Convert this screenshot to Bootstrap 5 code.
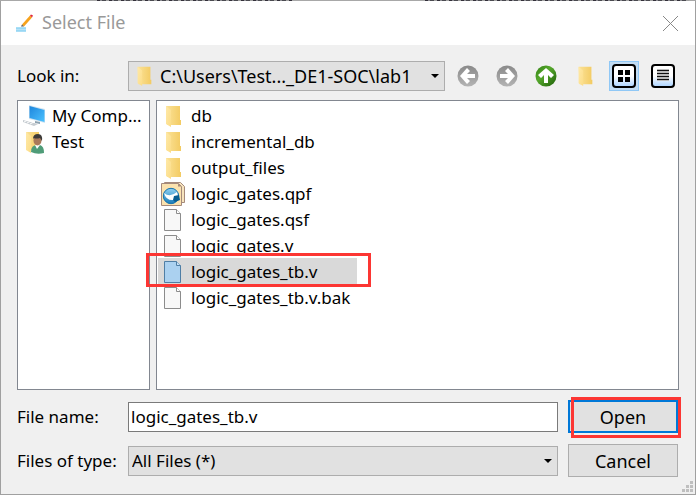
<!DOCTYPE html>
<html lang="en">
<head>
<meta charset="utf-8">
<meta name="viewport" content="width=device-width, initial-scale=1">
<title>Select File</title>
<link href="https://cdn.jsdelivr.net/npm/bootstrap@5.3.0/dist/css/bootstrap.min.css" rel="stylesheet">
<style>
body { font-family: "Noto Sans", sans-serif; font-size: 17px; line-height: 26px; color: #000; background: #a0a0a0; }
.strip { height: 1px; background: #a8a8a8; }
.strip i { height: 1px; background: repeating-linear-gradient(90deg, #33303a 0 3px, #8a8a90 3px 5px, #4a4a50 5px 9px, #a0a0a0 9px 12px); }
.strip-a { width: 28%; margin-left: 14%; }
.strip-b { width: 38%; margin-left: 19%; }
.dialog { background: #f0f0f0; border: 1px solid #a0a0a0; border-top: 0; }
.titlebar { height: 44px; background: #fff; color: #999; padding: 0 16px 0 15px; }
.title-text { font-size: 18px; }
.titlebar button { color: #888; }
.plain { border: 0; background: none; padding: 0; color: inherit; }
.panel { padding: 16px; }
.label-col { width: 111px; }
.look-box { width: 317px; }
.field { height: 30px; border: 1px solid #adadad; border-radius: 0; background: #e1e1e1; color: #000; padding: 0 24px 0 3px; width: 100%; appearance: none; line-height: 26px; }
input.field { background: #fff; border-color: #7a7a7a; padding: 0 2px; }
.look-box .field { padding-left: 31px; font-size: 18px; }
.over-icon { left: 5px; top: 4px; pointer-events: none; }
.caret { right: 6px; top: 13px; pointer-events: none; }
.tool { width: 30px; height: 30px; }
.tool.on { background: #c2dcf3; border: 1px solid #90c8f6; }
.tools { gap: 9px; margin: 0 1px 0 8px; }
.panes { height: 290px; margin: 9px 0 10px; gap: 6px; }
.pane { background: #fff; border: 1px solid #828790; padding: 1px; }
.places { width: 133px; }
.files { min-width: 199px; }
.entry { height: 26px; gap: 6px; padding: 1px 3px 0 3px; text-align: left; white-space: nowrap; width: 100%; }
.picked { background: #d9d9d9; }
.frame { border: 3px solid #fc3633; pointer-events: none; z-index: 2; }
.row-frame { left: -12px; right: -14px; top: -5px; bottom: -3px; }
.open-frame { left: 3px; right: -3px; top: -3px; bottom: -5px; }
.actions { gap: 11px; margin-right: 1px; }
.action-row { gap: 10px; }
.push { width: 110px; height: 33px; background: #e1e1e1; border: 1px solid #adadad; color: #000; font-size: 18px; }
.push.main { border: 2px solid #0078d7; }
.grip { right: 2px; bottom: 2px; }
</style>
<script src="https://cdn.jsdelivr.net/npm/bootstrap@5.3.0/dist/js/bootstrap.bundle.min.js"></script>
</head>
<body>
<svg width="0" height="0" class="position-absolute" aria-hidden="true">
  <defs>
    <linearGradient id="gFold" x2="1"><stop offset="0" stop-color="#fbe298"/><stop offset="1" stop-color="#f3cb62"/></linearGradient>
    <linearGradient id="gFront" x2="1" y2="1"><stop offset="0" stop-color="#ffe9a8"/><stop offset="1" stop-color="#fbdc86"/></linearGradient>
    <linearGradient id="gGrey" x2="0" y2="1"><stop offset="0" stop-color="#8a8a8a"/><stop offset="1" stop-color="#b4b4b4"/></linearGradient>
    <linearGradient id="gGreen" x2="1" y2="1"><stop offset="0" stop-color="#2f7f12"/><stop offset=".4" stop-color="#56a82c"/><stop offset="1" stop-color="#1e5f08"/></linearGradient>
    <linearGradient id="gView" x2="0" y2="1"><stop offset=".5" stop-color="#fff"/><stop offset="1" stop-color="#a9d2ff"/></linearGradient>
    <linearGradient id="gScreen" x2="1" y2="1"><stop offset="0" stop-color="#1e86dc"/><stop offset="1" stop-color="#4cc2ff"/></linearGradient>
    <linearGradient id="gBall" x2="0" y2="1"><stop offset="0" stop-color="#8fd0f2"/><stop offset="1" stop-color="#1a7dba"/></linearGradient>
    <symbol id="folder" viewBox="0 0 24 24"><path d="M5 2h14v14h1v5H6z" fill="url(#gFold)"/><path d="M5 2l5 4v17l-5-3z" fill="url(#gFront)"/></symbol>
    <symbol id="sheet" viewBox="0 0 24 24"><path d="M3.500 1.500h12l4 4v17h-16z" fill="#f8f8f8" stroke="#8c8c8c"/><path d="M15.500 1.500v4h4" fill="#fff" stroke="#8c8c8c"/></symbol>
    <symbol id="sheetOn" viewBox="0 0 24 24"><path d="M3.500 1.500h12l4 4v17h-16z" fill="#abd1f0" stroke="#4f7ea5"/><path d="M15.500 1.500v4h4" fill="#c6e0f5" stroke="#4f7ea5"/></symbol>
    <symbol id="project" viewBox="0 0 24 24"><path d="M3.500 .500h16l4 4v16h-20z" fill="#f7e4bd" stroke="#a58a7b"/><path d="M.500 1.500h17l3 3v19h-20z" fill="#fbe2ae" stroke="#a58a7b"/><path d="M17 1.500v3h3.500z" fill="#a58a7b"/><circle cx="10" cy="14" r="7.700" fill="url(#gBall)" stroke="#1674ae"/><path d="M3 11q6 5 13-1l1 4h-4v4q-8 1-10-7z" fill="#fff"/><path d="M13 14l5-1 1 5-5 2-2-2z" fill="#075d91"/></symbol>
    <symbol id="computer" viewBox="0 0 24 24"><path d="M7 1l16 4v14l-16-4z" fill="#d4e4f0"/><path d="M7.500 2l15 4v12l-15-4z" fill="url(#gScreen)"/><path d="M13 17l5 1v2l-5-1z" fill="#8da2b0"/><path d="M1 16l11 3 4 1-4 2-11-4z" fill="#c6ccd1"/><path d="M2 18l4-2M5 19l4-2M8 20l4-2" stroke="#fff"/></symbol>
    <symbol id="person" viewBox="0 0 24 24"><path d="M4 2h13v18H5z" fill="url(#gFold)"/><path d="M4 2l5 4v17l-5-3z" fill="url(#gFront)"/><path d="M9 22q0-7 6-7h3q4 1 4 8-7 2-13-1z" fill="#4f9c78"/><path d="M13 15l2 4 3-4z" fill="#fff"/><ellipse cx="15.500" cy="10.500" rx="4" ry="5" fill="#a9795a"/><path d="M11 9q0-5 5-5t4 7l-2-3q-4 1-6 0z" fill="#3c3a38"/></symbol>
    <symbol id="arrow" viewBox="0 0 22 22"><path d="M10 3L3 11l7 8 3-3-3-3h8V9h-8l3-3z" fill="#fff"/></symbol>
  </defs>
</svg>
<div class="min-vh-100 d-flex flex-column">
<div class="strip d-flex"><i class="strip-a"></i><i class="strip-b"></i></div>
<main class="dialog flex-grow-1 position-relative">
  <header class="titlebar d-flex align-items-center">
    <svg width="18" height="19" viewBox="0 0 18 18" class="me-2" aria-hidden="true"><path d="M0 13h10v4H0z" fill="#b5e2f8"/><path d="M0 13.500h10M0 16.500h10" stroke="#7accf0"/><path d="M6 10L14 1l2 2-8 9z" fill="#f6a21c"/><path d="M14 1l1-1 2 1-1 2z" fill="#e0263d"/><path d="M5 12l1-2 2 2z" fill="#555"/></svg>
    <h1 class="m-0 fw-normal title-text">Select File</h1>
    <button type="button" class="plain ms-auto d-flex" aria-label="Close"><svg width="17" height="17" viewBox="0 0 17 17"><path d="M1 1l15 15M16 1L1 16" stroke="currentColor"/></svg></button>
  </header>
  <form class="panel">
    <div class="d-flex align-items-center">
      <label class="label-col flex-shrink-0" for="look">Look in:</label>
      <div class="look-box position-relative flex-grow-1">
        <select id="look" class="field d-block"><option>C:\Users\Test..._DE1-SOC\lab1</option></select>
        <svg class="over-icon position-absolute" width="22" height="22"><use href="#folder"/></svg>
        <svg class="caret position-absolute" width="8" height="5"><path d="M0 0h8L4 4z"/></svg>
      </div>
      <div class="tools d-flex align-items-center flex-shrink-0">
        <button type="button" class="plain tool d-flex align-items-center justify-content-center" aria-label="Back"><svg width="22" height="22"><circle cx="11" cy="11" r="10.500" fill="url(#gGrey)"/><use href="#arrow"/></svg></button>
        <button type="button" class="plain tool d-flex align-items-center justify-content-center" aria-label="Forward"><svg width="22" height="22"><circle cx="11" cy="11" r="10.500" fill="url(#gGrey)"/><use href="#arrow" transform="rotate(180 11 11)"/></svg></button>
        <button type="button" class="plain tool d-flex align-items-center justify-content-center" aria-label="Parent directory"><svg width="22" height="22"><circle cx="11" cy="11" r="10.500" fill="url(#gGreen)"/><use href="#arrow" transform="rotate(90 11 11)"/></svg></button>
        <button type="button" class="plain tool d-flex align-items-center justify-content-center" aria-label="New folder"><svg width="24" height="22"><use href="#folder"/></svg></button>
        <button type="button" class="plain tool on d-flex align-items-center justify-content-center" aria-label="List view"><svg width="24" height="24"><rect x="1" y="1" width="22" height="22" rx="3" fill="url(#gView)" stroke="#000" stroke-width="2"/><path d="M6 6h5v5H6zM13 6h5v5h-5zM6 13h5v5H6zM13 13h5v5h-5z"/></svg></button>
        <button type="button" class="plain tool d-flex align-items-center justify-content-center" aria-label="Detail view"><svg width="24" height="24"><rect x="1" y="1" width="22" height="22" rx="3" fill="url(#gView)" stroke="#000" stroke-width="2"/><path d="M6 5h12v12H6z" fill="#bbb"/><path d="M6 6.500h12M6 9.500h12M6 12.500h12M6 15.500h12" stroke="#111"/></svg></button>
      </div>
    </div>
    <div class="panes d-flex">
      <div class="pane places flex-shrink-0">
        <button type="button" class="plain entry d-flex align-items-center"><svg width="24" height="24"><use href="#computer"/></svg>My Comp...</button>
        <button type="button" class="plain entry d-flex align-items-center"><svg width="24" height="24"><use href="#person"/></svg>Test</button>
      </div>
      <div class="pane flex-grow-1">
        <div class="files d-inline-flex flex-column">
          <button type="button" class="plain entry d-flex align-items-center"><svg width="24" height="24"><use href="#folder"/></svg>db</button>
          <button type="button" class="plain entry d-flex align-items-center"><svg width="24" height="24"><use href="#folder"/></svg>incremental_db</button>
          <button type="button" class="plain entry d-flex align-items-center"><svg width="24" height="24"><use href="#folder"/></svg>output_files</button>
          <button type="button" class="plain entry d-flex align-items-center"><svg width="24" height="24"><use href="#project"/></svg>logic_gates.qpf</button>
          <button type="button" class="plain entry d-flex align-items-center"><svg width="24" height="24"><use href="#sheet"/></svg>logic_gates.qsf</button>
          <button type="button" class="plain entry d-flex align-items-center"><svg width="24" height="24"><use href="#sheet"/></svg>logic_gates.v</button>
          <div class="position-relative"><button type="button" class="plain entry picked d-flex align-items-center"><svg width="24" height="24"><use href="#sheetOn"/></svg>logic_gates_tb.v</button><span class="frame row-frame position-absolute"></span></div>
          <button type="button" class="plain entry d-flex align-items-center"><svg width="24" height="24"><use href="#sheet"/></svg>logic_gates_tb.v.bak</button>
        </div>
      </div>
    </div>
    <div class="actions d-flex flex-column">
      <div class="action-row d-flex align-items-center">
        <div class="d-flex align-items-center flex-grow-1">
          <label class="label-col flex-shrink-0" for="fname">File name:</label>
          <input id="fname" class="field" type="text" value="logic_gates_tb.v">
        </div>
        <div class="position-relative flex-shrink-0"><button type="button" class="push main d-block p-0">Open</button><span class="frame open-frame position-absolute"></span></div>
      </div>
      <div class="action-row d-flex align-items-center">
        <div class="d-flex align-items-center flex-grow-1">
          <label class="label-col flex-shrink-0" for="ftype">Files of type:</label>
          <div class="position-relative flex-grow-1">
            <select id="ftype" class="field d-block"><option>All Files (*)</option></select>
            <svg class="caret position-absolute" width="8" height="5"><path d="M0 0h8L4 4z"/></svg>
          </div>
        </div>
        <button type="button" class="push p-0 flex-shrink-0">Cancel</button>
      </div>
    </div>
  </form>
  <svg class="grip position-absolute" width="11" height="11" aria-hidden="true"><path d="M8 0h3v3H8zM4 4h3v3H4zM8 4h3v3H8zM0 8h3v3H0zM4 8h3v3H4zM8 8h3v3H8z" fill="#bfbfbf"/></svg>
</main>
</div>
</body>
</html>
